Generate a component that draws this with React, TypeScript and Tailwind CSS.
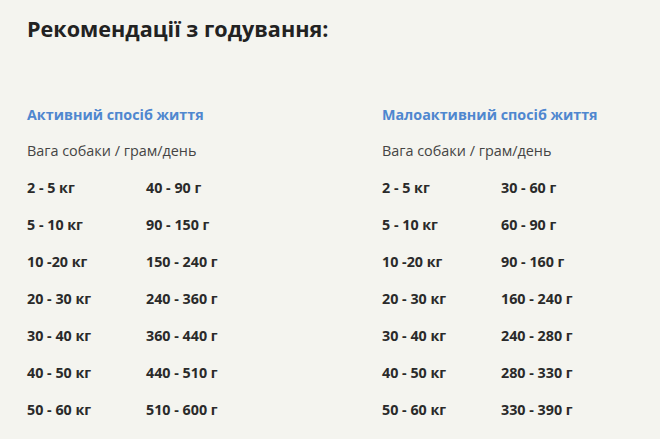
const active: [string, string][] = [
  ["2 - 5 кг", "40 - 90 г"],
  ["5 - 10 кг", "90 - 150 г"],
  ["10 -20 кг", "150 - 240 г"],
  ["20 - 30 кг", "240 - 360 г"],
  ["30 - 40 кг", "360 - 440 г"],
  ["40 - 50 кг", "440 - 510 г"],
  ["50 - 60 кг", "510 - 600 г"],
];

const lowActive: [string, string][] = [
  ["2 - 5 кг", "30 - 60 г"],
  ["5 - 10 кг", "60 - 90 г"],
  ["10 -20 кг", "90 - 160 г"],
  ["20 - 30 кг", "160 - 240 г"],
  ["30 - 40 кг", "240 - 280 г"],
  ["40 - 50 кг", "280 - 330 г"],
  ["50 - 60 кг", "330 - 390 г"],
];

function FeedTable({ title, rows }: { title: string; rows: [string, string][] }) {
  return (
    <div className="w-[355px] shrink-0">
      <h3 className="text-[14.3px] font-bold leading-[36px] text-[#4f87cf]">{title}</h3>
      <p className="text-[14.4px] leading-[36px] text-[#444]">Вага собаки / грам/день</p>
      <div>
        {rows.map(([weight, grams]) => (
          <div key={weight} className="flex text-[14.3px] font-bold leading-[37px] text-[#2a2a2a]">
            <span className="w-[119px]">{weight}</span>
            <span>{grams}</span>
          </div>
        ))}
      </div>
    </div>
  );
}

export default function App() {
  return (
    <div
      className="min-h-[439px] overflow-hidden bg-[#f4f4ef] pl-[27px] pt-[15px]"
      style={{ fontFamily: '"Open Sans", sans-serif' }}
    >
      <h2 className="text-[21.6px] font-bold leading-[28px] text-[#222]">Рекомендації з годування:</h2>
      <div className="mt-[54px] flex">
        <FeedTable title="Активний спосіб життя" rows={active} />
        <FeedTable title="Малоактивний спосіб життя" rows={lowActive} />
      </div>
    </div>
  );
}
